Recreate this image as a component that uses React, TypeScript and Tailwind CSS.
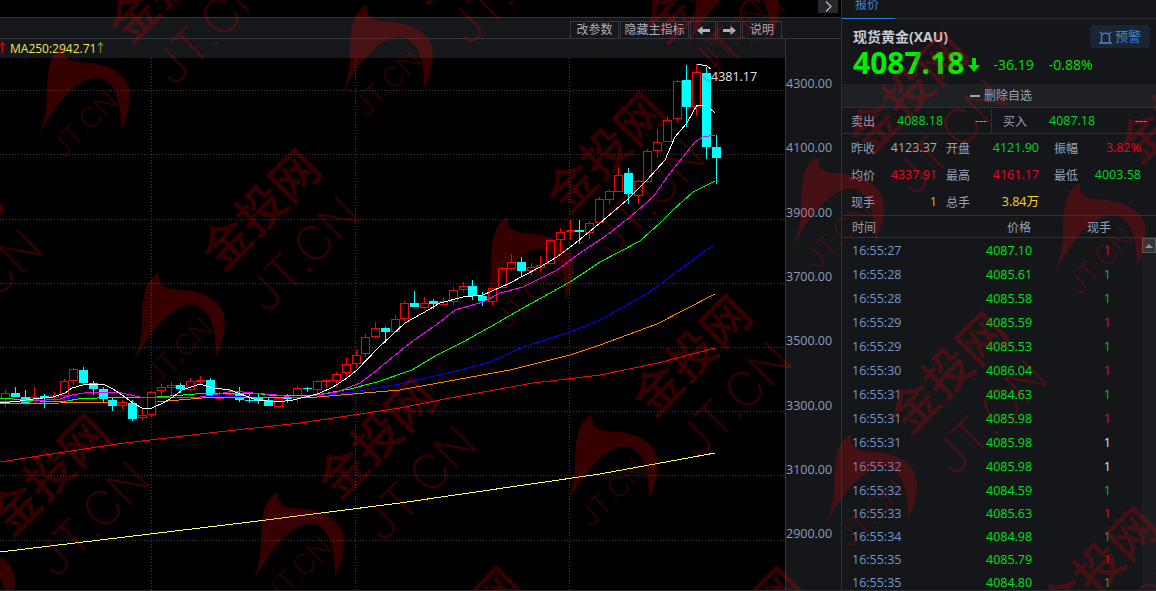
const font = { fontFamily: '"Open Sans", "Noto Sans CJK SC", sans-serif' };

type Candle = [number, number, number, number, 'r' | 'c'];

// body top, body bottom, wick top, wick bottom
const candles: Candle[] = [
  [393, 398, 389, 407, 'r'], [393, 397, 387, 397, 'c'], [397, 404, 390, 404, 'c'], [397, 399, 387, 404, 'r'],
  [396, 398, 394, 408, 'c'], [395, 397, 392, 402, 'r'], [381, 395, 379, 402, 'r'], [369, 380, 368, 385, 'r'],
  [370, 383, 367, 385, 'c'], [383, 389, 381, 395, 'c'], [389, 399, 387, 403, 'c'], [400, 406, 397, 411, 'c'],
  [402, 405, 400, 409, 'r'], [403, 419, 400, 421, 'c'], [415, 417, 408, 420, 'r'], [392, 414, 391, 417, 'r'],
  [387, 390, 384, 396, 'r'], [385, 387, 382, 395, 'r'], [385, 389, 383, 393, 'c'], [381, 389, 378, 391, 'r'],
  [380, 381, 376, 385, 'r'], [380, 395, 378, 397, 'c'], [397, 398, 392, 401, 'r'], [393, 394, 390, 397, 'r'],
  [394, 400, 387, 402, 'c'], [400, 401, 393, 403, 'c'], [397, 401, 393, 404, 'c'], [400, 406, 397, 406, 'c'],
  [398, 406, 397, 408, 'r'], [398, 399, 394, 403, 'c'], [388, 397, 386, 403, 'r'], [388, 389, 387, 392, 'c'],
  [381, 389, 380, 395, 'r'], [380, 381, 379, 388, 'r'], [374, 380, 372, 387, 'r'],
  [364, 372, 357, 378, 'r'], [355, 363, 350, 367, 'r'], [337, 353, 334, 357, 'r'], [328, 336, 322, 338, 'r'],
  [328, 332, 327, 343, 'c'], [319, 331, 315, 332, 'r'], [303, 318, 301, 321, 'r'], [303, 307, 291, 307, 'c'],
  [303, 307, 297, 309, 'r'], [301, 304, 299, 309, 'c'], [301, 304, 297, 304, 'r'], [290, 301, 287, 305, 'r'],
  [286, 289, 282, 292, 'r'], [286, 296, 280, 300, 'c'], [296, 301, 292, 306, 'c'], [288, 301, 288, 305, 'r'],
  [268, 287, 267, 287, 'r'], [262, 268, 254, 271, 'r'], [262, 271, 257, 277, 'c'], [267, 270, 263, 276, 'r'],
  [265, 267, 256, 272, 'r'], [240, 263, 240, 263, 'r'], [232, 239, 228, 253, 'r'], [230, 231, 220, 240, 'r'],
  [230, 232, 220, 244, 'c'], [223, 232, 221, 239, 'r'], [199, 222, 197, 222, 'r'], [191, 199, 189, 205, 'r'],
  [175, 191, 168, 192, 'r'], [173, 194, 168, 204, 'c'], [181, 195, 180, 204, 'r'], [151, 181, 149, 183, 'r'],
  [142, 150, 129, 158, 'r'], [120, 141, 116, 142, 'r'], [81, 118, 80, 123, 'r'], [80, 107, 65, 127, 'c'],
  [72, 106, 64, 116, 'r'], [73, 147, 67, 159, 'c'], [147, 158, 135, 184, 'c'],
];

const maLines: { color: string; points: string }[] = [
  { color: '#ffff66', points: '0,552 250,522 400,503 600,474 715,453' },
  { color: '#ff0000', points: '0,462 117,444 200,434 300,423 400,408 450,398 533,383 600,375 658,363 715,348' },
  { color: '#ff8000', points: '0,404 60,403 110,402 157,402 213,397 317,397 400,390 510,370 570,355 600,345 657,324 715,294' },
  { color: '#0000ff', points: '0,401 37,401 77,398 110,397 200,397 253,396 317,396 353,392 400,384 460,370 490,362 523,347 567,333 600,320 648,293 706,250 715,245' },
  { color: '#00ff00', points: '0,398 40,401 67,401 78,399 117,397 157,397 183,395 207,393 253,393 277,396 317,395 350,389 377,382 412,370 437,355 463,342 490,327 523,308 570,282 600,262 640,241 660,223 673,210 693,192 715,181' },
  { color: '#ff00ff', points: '0,402 33,401 60,399 72,395 90,392 117,392 140,397 167,397 193,398 213,395 233,391 253,393 277,395 297,398 317,395 337,392 360,383 377,370 410,343 440,322 455,310 483,302 500,293 523,287 557,270 580,253 607,235 630,217 653,197 670,173 695,142 703,137 715,135' },
  { color: '#ffffff', points: '0,403 20,401 33,399 53,397 65,393 72,388 83,385 93,384 103,384 113,389 122,395 133,403 142,408 152,408 163,403 173,397 182,390 200,384 213,388 230,390 243,395 257,400 277,402 293,400 310,396 320,393 333,387 347,378 357,370 378,348 405,323 423,313 440,303 463,297 483,295 510,283 540,267 557,257 573,245 600,223 627,200 647,180 665,160 675,137 687,123 697,105 707,106 715,113' },
];

const gridY = [90, 154, 219, 283, 347, 411, 475, 540];
const gridX = [151, 355, 569];
const axisLabels = ['4300.00', '4100.00', '3900.00', '3700.00', '3500.00', '3300.00', '3100.00', '2900.00'];

const ticks: [string, string, string, boolean?][] = [
  ['16:55:27', '4087.10', 'r'],
  ['16:55:28', '4085.61', 'g'],
  ['16:55:28', '4085.58', 'g'],
  ['16:55:29', '4085.59', 'r'],
  ['16:55:29', '4085.53', 'g'],
  ['16:55:30', '4086.04', 'r'],
  ['16:55:31', '4084.63', 'g'],
  ['16:55:31', '4085.98', 'r'],
  ['16:55:31', '4085.98', 'w'],
  ['16:55:32', '4085.98', 'w'],
  ['16:55:32', '4084.59', 'g'],
  ['16:55:33', '4085.63', 'r', true],
  ['16:55:34', '4084.98', 'g', true],
  ['16:55:35', '4085.79', 'r', true],
  ['16:55:35', '4084.80', 'g', true],
];

// centre of the middle character of each big watermark
const bigMarks = [
  [-60, 240], [47, 472], [258, 207], [374, 436], [689, 353], [945, 370], [1096, 565], [603, 150],
  [740, 625], [460, 625], [165, -20], [460, -60], [700, -20], [905, 90], [1175, 100],
];
const logoMarks = [
  [36, 46], [339, 5], [131, 273], [480, 217], [250, 492], [564, 415], [790, 157], [1052, 183], [685, -43], [823, 435], [-79, 532],
];

function Watermarks() {
  return (
    <div className="absolute inset-0 pointer-events-none overflow-hidden opacity-[0.21] text-[#ff0000]">
      {bigMarks.map(([x, y]) => (
        <div key={`${x}-${y}`}>
          <div
            className="absolute -translate-x-1/2 -translate-y-1/2 -rotate-45 whitespace-nowrap text-[48px] leading-none font-medium"
            style={{ left: x, top: y, fontFamily: '"Noto Sans CJK SC", sans-serif' }}
          >
            金投网
          </div>
          <div
            className="absolute -translate-x-1/2 -translate-y-1/2 -rotate-45 whitespace-nowrap text-[48px] leading-none font-extralight"
            style={{ left: x + 45, top: y + 47, fontFamily: 'Inter, sans-serif' }}
          >
            JT.CN
          </div>
        </div>
      ))}
      {logoMarks.map(([x, y]) => (
        <div key={`${x}-${y}`} className="absolute w-[96px] h-[98px]" style={{ left: x, top: y }}>
          <svg width="96" height="98" viewBox="0 0 96 98" className="block">
            <path
              d="M28 0C14 6 11 25 11 50C11 68 6 84 0 95C10 76 26 46 50 34C68 26 86 38 85 84C94 66 98 44 88 32C76 18 56 17 42 16C33 15 26 10 28 0Z"
              fill="#ff0000"
            />
          </svg>
          <div
            className="absolute left-[48px] top-[78px] -translate-x-1/2 -translate-y-1/2 -rotate-45 whitespace-nowrap text-[28px] leading-none font-extralight"
            style={{ fontFamily: 'Inter, sans-serif' }}
          >
            JT.CN
          </div>
        </div>
      ))}
    </div>
  );
}

function Chart() {
  return (
    <div className="relative flex-1">
      <svg width="785" height="533" viewBox="0 58 785 533" className="block" shapeRendering="crispEdges">
        {gridY.map((y) => (
          <line key={y} x1="0" x2="785" y1={y + 0.5} y2={y + 0.5} stroke="#3a3a3a" strokeDasharray="1 2" />
        ))}
        {gridX.map((x) => (
          <line key={x} x1={x + 0.5} x2={x + 0.5} y1="58" y2="591" stroke="#3a3a3a" strokeDasharray="1 2" />
        ))}
        {candles.map(([top, bottom, wickTop, wickBottom, kind], i) => {
          const x = Math.round(5.3 + 9.73 * i);
          const color = kind === 'r' ? '#ff0000' : '#00ffff';
          return (
            <g key={i}>
              <line x1={x + 0.5} x2={x + 0.5} y1={wickTop} y2={wickBottom} stroke={color} />
              {kind === 'r' ? (
                <rect x={x - 3.5} y={top + 0.5} width={8} height={bottom - top} fill="#000" stroke={color} strokeWidth="1" />
              ) : (
                <rect x={x - 4} y={top} width={9} height={bottom - top} fill={color} />
              )}
            </g>
          );
        })}
        {maLines.map((l) => (
          <polyline key={l.color} points={l.points} fill="none" stroke={l.color} strokeWidth="1" />
        ))}
        <polyline points="697,64 707,66 711,69" fill="none" stroke="#fff" strokeWidth="1" />
      </svg>
      <span className="absolute left-[711px] top-[10px] text-[12.5px] leading-[18px] text-[#e6e6e6]">4381.17</span>
    </div>
  );
}

function ToolButton({ children, className }: { children: React.ReactNode; className: string }) {
  return (
    <div className={`h-[17px] border border-b-0 border-[#33363c] flex items-center justify-center text-xs leading-none text-[#a9b1bd] ${className}`}>
      {children}
    </div>
  );
}

function Arrow({ flip }: { flip?: boolean }) {
  return (
    <svg width="13" height="9" viewBox="0 0 13 9" className={flip ? 'rotate-180' : ''}>
      <path d="M0 4.5L5.5 0V3H13V6H5.5V9Z" fill="#a9b1bd" />
    </svg>
  );
}

function Stat({ label, value, color, className }: { label: string; value: string; color: string; className: string }) {
  return (
    <div className={`flex items-center justify-between pt-[2px] ${className}`}>
      <span className="text-xs text-[#9aa3b2]">{label}</span>
      <span className={`text-[12.5px] ${color}`}>{value}</span>
    </div>
  );
}

const qtyColor: Record<string, string> = { r: 'text-[#f0001c]', g: 'text-[#00c21c]', w: 'text-[#d5e2f5]' };

function QuotePanel() {
  return (
    <div className="w-[315px] h-full border-l border-[#2e3035] bg-[#14161a] flex flex-col">
      <div className="h-[19px] border-b border-[#2e3035] flex shrink-0">
        <div className="w-[53px] h-[19px] border-b border-[#2f7fdc] pl-[13px] text-xs leading-[9px] text-[#3c87dc]">报价</div>
      </div>
      <div className="h-[65px] shrink-0 pl-[11px] pr-[6px] relative">
        <div className="flex items-center justify-between pt-[6px]">
          <span className="text-sm font-bold leading-[22px] text-[#c5cad3]">现货黄金(XAU)</span>
          <div className="w-[60px] h-[23px] rounded bg-[#1a2432] flex items-center justify-center gap-[3px] text-[13px] text-[#3c87dc]">
            <svg width="13" height="14" viewBox="0 0 13 14" fill="none" stroke="#3c87dc" strokeWidth="1.3">
              <path d="M0 13H13M2.5 13V6.5C2.5 2 10.5 2 10.5 6.5V13M1 2L2.5 3.5M12 2L10.5 3.5" />
            </svg>
            预警
          </div>
        </div>
        <div className="flex items-center h-[32px] -mt-[1px]">
          <span className="text-[30px] leading-none font-bold text-[#00f000]">4087.18</span>
          <svg width="12" height="14" viewBox="0 0 12 14" className="ml-[4px] mt-[3px]">
            <path d="M4 0H8V7H12L6 14L0 7H4Z" fill="#00e000" />
          </svg>
          <span className="ml-[13px] mt-[3px] text-sm text-[#00e000]">-36.19</span>
          <span className="ml-[15px] mt-[3px] text-sm text-[#00e000]">-0.88%</span>
        </div>
      </div>
      <div className="h-[24px] shrink-0 bg-[#1e2024] border-b border-[#2e3035] flex items-center justify-center gap-[4px] pl-[4px] pt-[1px] text-xs text-[#9aa3b2]">
        <span className="w-[10px] h-[2px] bg-[#9aa3b2]" />
        删除自选
      </div>
      <div className="h-[26px] shrink-0 border-b border-[#2e3035] flex items-center pt-[2px] text-[12.5px] text-[#00d81c]">
        <div className="w-[150px] h-full border-r border-[#2e3035] flex items-center pl-[9px]">
          <span className="w-[46px] text-xs text-[#9aa3b2]">卖出</span>
          <span>4088.18</span>
          <span className="ml-auto mr-[4px] text-[#9aa3b2]">---</span>
        </div>
        <div className="flex-1 h-full flex items-center pl-[11px] pr-[9px]">
          <span className="w-[46px] text-xs text-[#9aa3b2]">买入</span>
          <span>4087.18</span>
          <span className="ml-auto text-[#9aa3b2]">---</span>
        </div>
      </div>
      <div className="shrink-0 pl-[9px] flex flex-col h-[82px] border-b border-[#2e3035]">
        <div className="h-[27px] flex">
          <Stat label="昨收" value="4123.37" color="text-[#a8adb6]" className="w-[86px]" />
          <Stat label="开盘" value="4121.90" color="text-[#00d81c]" className="w-[93px] ml-[9px]" />
          <Stat label="振幅" value="3.82%" color="text-[#f0001c]" className="w-[87px] ml-[15px]" />
        </div>
        <div className="h-[27px] flex">
          <Stat label="均价" value="4337.91" color="text-[#f0001c]" className="w-[86px]" />
          <Stat label="最高" value="4161.17" color="text-[#f0001c]" className="w-[93px] ml-[9px]" />
          <Stat label="最低" value="4003.58" color="text-[#00d81c]" className="w-[87px] ml-[15px]" />
        </div>
        <div className="h-[27px] flex">
          <Stat label="现手" value="1" color="text-[#c8c000]" className="w-[86px]" />
          <Stat label="总手" value="3.84万" color="text-[#ffd21c]" className="w-[93px] ml-[9px]" />
        </div>
      </div>
      <div className="h-[22px] shrink-0 border-b border-[#2e3035] flex items-center pt-[2px] text-xs text-[#9aa3b2] pl-[10px]">
        <span className="w-[24px]">时间</span>
        <span className="w-[155px] text-right">价格</span>
        <span className="w-[80px] text-right">现手</span>
      </div>
      <div className="flex-1 flex min-h-0 overflow-hidden">
        <div className="flex-1 pt-[1px] overflow-hidden">
          {ticks.map(([time, price, dir, tight], i) => (
            <div key={i} className={`flex items-center text-[12.5px] ${tight ? 'h-[23px]' : 'h-[24px]'}`}>
              <span className="w-[144px] pl-[10px] text-[#7397c9]">{time}</span>
              <span className="w-[60px] text-[#00e01c]">{price}</span>
              <span className={`w-[65px] text-right ${qtyColor[dir]}`}>1</span>
            </div>
          ))}
        </div>
        <div className="w-[14px] bg-[#1b1d20] shrink-0">
          <div className="h-[15px] bg-[#333538] border border-[#55585c] flex items-center justify-center">
            <div className="w-0 h-0 border-x-[4px] border-x-transparent border-b-[4px] border-b-[#8a8d92]" />
          </div>
        </div>
      </div>
    </div>
  );
}

export default function App() {
  return (
    <div className="relative w-[1156px] h-[591px] bg-black overflow-hidden flex" style={font}>
      <div className="w-[841px] h-full flex flex-col">
        <div className="h-[18px] shrink-0 border-b border-[#33363c] flex justify-end pr-[3px]">
          <div className="w-[20px] h-[13px] bg-[#26282c] flex items-center justify-center">
            <svg width="7" height="11" viewBox="0 0 7 11" fill="none" stroke="#b5b8be" strokeWidth="1.3">
              <path d="M1 0.5L6 5.5L1 10.5" />
            </svg>
          </div>
        </div>
        <div className="h-[21px] shrink-0 bg-[#15171a] border-b border-[#33363c] flex justify-end items-end pr-[59px] gap-[1px]">
          <ToolButton className="w-[49px]">改参数</ToolButton>
          <ToolButton className="w-[69px]">隐藏主指标</ToolButton>
          <ToolButton className="w-[26px]"><Arrow /></ToolButton>
          <ToolButton className="w-[24px]"><Arrow flip /></ToolButton>
          <ToolButton className="w-[40px]">说明</ToolButton>
        </div>
        <div className="flex-1 flex min-h-0">
          <div className="w-[785px] flex flex-col">
            <div className="h-[19px] shrink-0 bg-[#15171a] flex items-center text-xs text-[#f2e45c] pl-[10px] relative">
              <span className="absolute -left-[4px] text-[#ff0000]">↑</span>
              MA250:2942.71<span className="-ml-[2px] text-[#7fc04a]">↑</span>
            </div>
            <Chart />
          </div>
          <div className="flex-1 bg-[#14161a] border-l border-[#33363c] pt-[13px] text-[12.5px] text-[#8f9bb3]">
            {axisLabels.map((l) => (
              <div key={l} className="h-[64.3px] leading-[18px] flex items-center">{l}</div>
            ))}
          </div>
        </div>
      </div>
      <QuotePanel />
      <Watermarks />
      <div className="absolute bottom-0 inset-x-0 h-px bg-[#2a2c30]" />
    </div>
  );
}
